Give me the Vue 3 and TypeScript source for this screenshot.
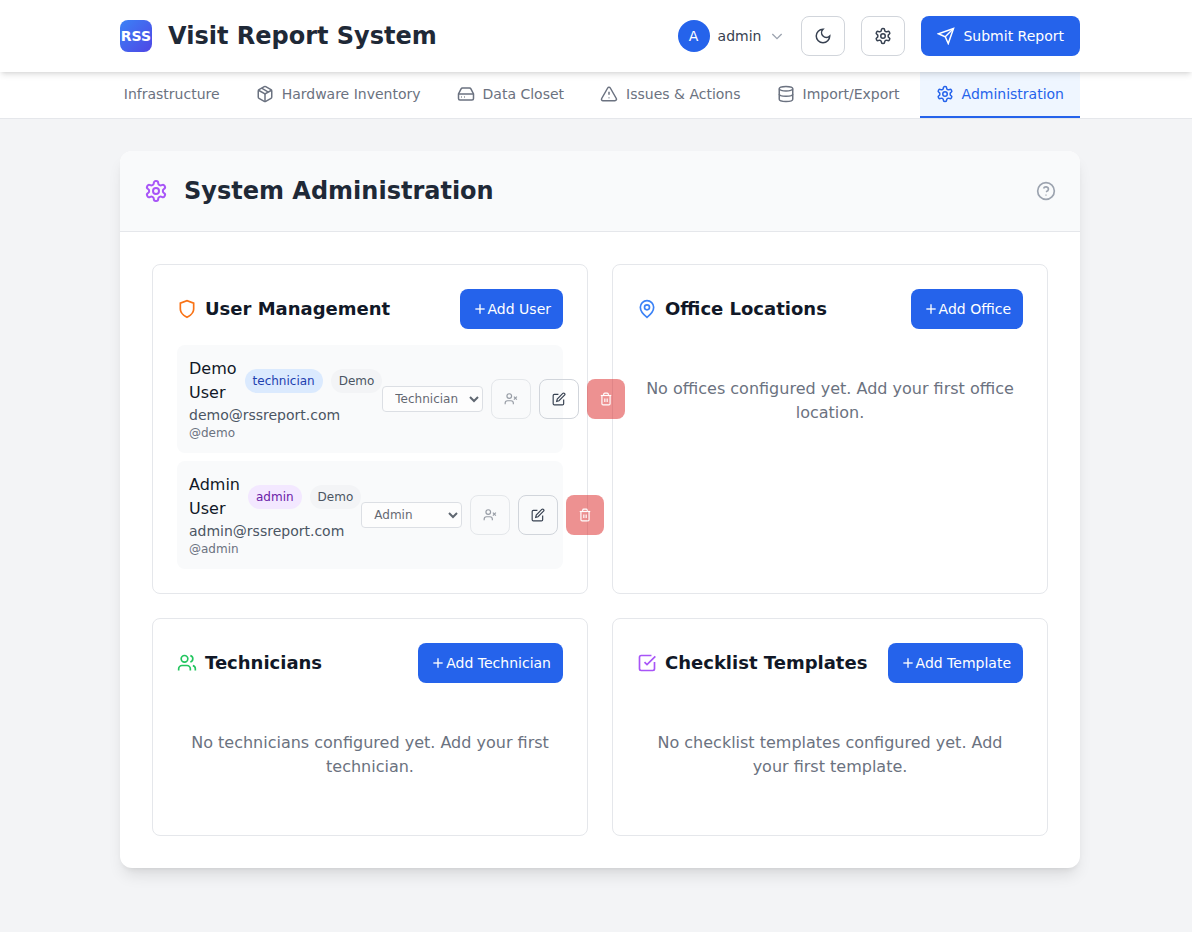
<script setup lang="ts">
import { h, ref } from 'vue'
import type { FunctionalComponent } from 'vue'

const glyphs = {
  settings: [
    'M12.22 2h-.44a2 2 0 0 0-2 2v.18a2 2 0 0 1-1 1.73l-.43.25a2 2 0 0 1-2 0l-.15-.08a2 2 0 0 0-2.73.73l-.22.38a2 2 0 0 0 .73 2.73l.15.1a2 2 0 0 1 1 1.72v.51a2 2 0 0 1-1 1.74l-.15.09a2 2 0 0 0-.73 2.73l.22.38a2 2 0 0 0 2.73.73l.15-.08a2 2 0 0 1 2 0l.43.25a2 2 0 0 1 1 1.73V20a2 2 0 0 0 2 2h.44a2 2 0 0 0 2-2v-.18a2 2 0 0 1 1-1.73l.43-.25a2 2 0 0 1 2 0l.15.08a2 2 0 0 0 2.73-.73l.22-.39a2 2 0 0 0-.73-2.73l-.15-.08a2 2 0 0 1-1-1.74v-.5a2 2 0 0 1 1-1.74l.15-.09a2 2 0 0 0 .73-2.73l-.22-.38a2 2 0 0 0-2.73-.73l-.15.08a2 2 0 0 1-2 0l-.43-.25a2 2 0 0 1-1-1.73V4a2 2 0 0 0-2-2z',
    'M15 12a3 3 0 1 1-6 0a3 3 0 0 1 6 0z',
  ],
  package: [
    'M11 21.73a2 2 0 0 0 2 0l7-4A2 2 0 0 0 21 16V8a2 2 0 0 0-1-1.73l-7-4a2 2 0 0 0-2 0l-7 4A2 2 0 0 0 3 8v8a2 2 0 0 0 1 1.73z',
    'M12 22V12',
    'M3.29 7 12 12l8.71-5',
    'm7.5 4.27 9 5.15',
  ],
  drive: [
    'M22 12H2',
    'M5.45 5.11 2 12v6a2 2 0 0 0 2 2h16a2 2 0 0 0 2-2v-6l-3.45-6.89A2 2 0 0 0 16.76 4H7.24a2 2 0 0 0-1.79 1.11z',
    'M5.5 16h1',
    'M9.5 16h1',
  ],
  alert: [
    'm21.73 18-8-14a2 2 0 0 0-3.48 0l-8 14A2 2 0 0 0 4 21h16a2 2 0 0 0 1.73-3z',
    'M12 9v4',
    'M11.5 17h1',
  ],
  database: [
    'M21 5a9 3 0 1 1-18 0a9 3 0 0 1 18 0z',
    'M3 5v14a9 3 0 0 0 18 0V5',
    'M3 12a9 3 0 0 0 18 0',
  ],
  moon: ['M12 3a6 6 0 0 0 9 9 9 9 0 1 1-9-9z'],
  send: ['M22 2 15 22l-4-9-9-4z', 'M22 2 11 13'],
  chevron: ['m5 9 7 7 7-7'],
  help: [
    'M22 12a10 10 0 1 1-20 0a10 10 0 0 1 20 0z',
    'M9.09 9a3 3 0 0 1 5.83 1c0 2-3 3-3 3',
    'M11.5 17h1',
  ],
  shield: ['M12 22s8-4 8-10V5l-8-3-8 3v7c0 6 8 10 8 10z'],
  pin: [
    'M20 10c0 6-8 12-8 12s-8-6-8-12a8 8 0 0 1 16 0z',
    'M15 10a3 3 0 1 1-6 0a3 3 0 0 1 6 0z',
  ],
  users: [
    'M16 21v-2a4 4 0 0 0-4-4H6a4 4 0 0 0-4 4v2',
    'M13 7a4 4 0 1 1-8 0a4 4 0 0 1 8 0z',
    'M16 3.128a4 4 0 0 1 0 7.744',
    'M22 21v-2a4 4 0 0 0-3-3.87',
  ],
  check: [
    'M21 10.656V19a2 2 0 0 1-2 2H5a2 2 0 0 1-2-2V5a2 2 0 0 1 2-2h12.344',
    'm9 11 3 3L22 4',
  ],
  plus: ['M5 12h14', 'M12 5v14'],
  userX: [
    'M16 21v-2a4 4 0 0 0-4-4H6a4 4 0 0 0-4 4v2',
    'M13 7a4 4 0 1 1-8 0a4 4 0 0 1 8 0z',
    'm17 8 5 5',
    'm22 8-5 5',
  ],
  edit: [
    'M11 4H4a2 2 0 0 0-2 2v14a2 2 0 0 0 2 2h14a2 2 0 0 0 2-2v-7',
    'M18.5 2.5a2.121 2.121 0 0 1 3 3L12 15l-4 1 1-4z',
  ],
  trash: [
    'M3 6h18',
    'M19 6v14a2 2 0 0 1-2 2H7a2 2 0 0 1-2-2V6',
    'M8 6V4a2 2 0 0 1 2-2h4a2 2 0 0 1 2 2v2',
    'M10 11v6',
    'M14 11v6',
  ],
} satisfies Record<string, string[]>

type IconName = keyof typeof glyphs

const Icon: FunctionalComponent<{ name: IconName; size?: number }> = (props) =>
  h(
    'svg',
    {
      width: props.size ?? 18,
      height: props.size ?? 18,
      viewBox: '0 0 24 24',
      fill: 'none',
      stroke: 'currentColor',
      'stroke-width': 2,
      'aria-hidden': 'true',
    },
    glyphs[props.name].map((d) => h('path', { d })),
  )
Icon.props = ['name', 'size']

interface Tab { label: string; icon?: IconName }
const tabs: Tab[] = [
  { label: 'Infrastructure' },
  { label: 'Hardware Inventory', icon: 'package' },
  { label: 'Data Closet', icon: 'drive' },
  { label: 'Issues & Actions', icon: 'alert' },
  { label: 'Import/Export', icon: 'database' },
  { label: 'Administration', icon: 'settings' },
]
const activeTab = ref('Administration')

type Role = 'technician' | 'admin'
interface User { id: string; name: string; email: string; role: Role }
const users = ref<User[]>([
  { id: 'demo', name: 'Demo User', email: 'demo@rssreport.com', role: 'technician' },
  { id: 'admin', name: 'Admin User', email: 'admin@rssreport.com', role: 'admin' },
])

interface Panel { key: string; title: string; icon: IconName; action: string; empty?: string }
const panels: Panel[] = [
  { key: 'users', title: 'User Management', icon: 'shield', action: 'Add User' },
  { key: 'offices', title: 'Office Locations', icon: 'pin', action: 'Add Office', empty: 'No offices configured yet. Add your first office location.' },
  { key: 'technicians', title: 'Technicians', icon: 'users', action: 'Add Technician', empty: 'No technicians configured yet. Add your first technician.' },
  { key: 'templates', title: 'Checklist Templates', icon: 'check', action: 'Add Template', empty: 'No checklist templates configured yet. Add your first template.' },
]
</script>

<template>
  <div class="page">
    <header class="topbar gutter">
      <div class="brand">
        <span class="logo">RSS</span>
        <h1>Visit Report System</h1>
      </div>
      <div class="actions">
        <button type="button" class="account">
          <span class="avatar">A</span>
          <span>admin</span>
          <Icon name="chevron" :size="16" class="caret" />
        </button>
        <button type="button" class="btn outline" aria-label="Toggle dark mode"><Icon name="moon" /></button>
        <button type="button" class="btn outline" aria-label="Settings"><Icon name="settings" /></button>
        <button type="button" class="btn primary submit"><Icon name="send" />Submit Report</button>
      </div>
    </header>

    <nav class="tabbar gutter" aria-label="Sections">
      <div class="tabs">
        <button
          v-for="tab in tabs"
          :key="tab.label"
          type="button"
          class="tab"
          :class="{ active: tab.label === activeTab }"
          @click="activeTab = tab.label"
        >
          <Icon v-if="tab.icon" :name="tab.icon" />
          {{ tab.label }}
        </button>
      </div>
    </nav>

    <main class="content gutter">
      <section class="admin-card">
        <div class="admin-head">
          <Icon name="settings" :size="24" class="admin-icon" />
          <h2>System Administration</h2>
          <button type="button" class="help" aria-label="Help"><Icon name="help" :size="20" /></button>
        </div>

        <div class="grid">
          <section v-for="panel in panels" :key="panel.key" class="panel">
            <div class="panel-head">
              <h3><Icon :name="panel.icon" :size="20" :class="panel.key" />{{ panel.title }}</h3>
              <button type="button" class="btn primary"><Icon name="plus" :size="16" />{{ panel.action }}</button>
            </div>
            <p v-if="panel.empty" class="empty">{{ panel.empty }}</p>
            <ul v-else class="users-list">
              <li v-for="user in users" :key="user.id" class="user">
                <div>
                  <div class="identity">
                    <span class="name">{{ user.name }}</span>
                    <span class="badge" :class="`role-${user.role}`">{{ user.role }}</span>
                    <span class="badge">Demo</span>
                  </div>
                  <div class="email">{{ user.email }}</div>
                  <div class="handle">@{{ user.id }}</div>
                </div>
                <div class="controls">
                  <select v-model="user.role" disabled :aria-label="`Role of ${user.name}`">
                    <option value="technician">Technician</option>
                    <option value="admin">Admin</option>
                  </select>
                  <button type="button" class="btn outline" disabled :aria-label="`Deactivate ${user.name}`"><Icon name="userX" :size="14" /></button>
                  <button type="button" class="btn outline" :aria-label="`Edit ${user.name}`"><Icon name="edit" :size="14" /></button>
                  <button type="button" class="btn danger" disabled :aria-label="`Delete ${user.name}`"><Icon name="trash" :size="14" /></button>
                </div>
              </li>
            </ul>
          </section>
        </div>
      </section>
    </main>
  </div>
</template>

<style>
body {
  margin: 0;
  background: #fff;
}
</style>

<style scoped>
.page {
  background: #f3f4f6;
  color: #111827;
  font-family: "DejaVu Sans", sans-serif;
  font-size: 16px;
  line-height: 24px;
}
.page *, .page { box-sizing: border-box; }
h1, h2, h3, p, ul { margin: 0; padding: 0; }
svg { display: block; flex: none; }
button { margin: 0; font: inherit; cursor: pointer; }
button:disabled { opacity: 0.5; cursor: not-allowed; }

.gutter { padding-left: 120px; padding-right: 112px; }

.topbar {
  position: sticky;
  top: 0;
  z-index: 10;
  display: flex;
  align-items: center;
  justify-content: space-between;
  padding-top: 16px;
  padding-bottom: 16px;
  background: #fff;
  box-shadow: 0 4px 6px -1px rgba(0, 0, 0, 0.1), 0 2px 4px -2px rgba(0, 0, 0, 0.1);
}
.brand, .actions { display: flex; align-items: center; gap: 16px; }
.logo {
  display: flex;
  align-items: center;
  justify-content: center;
  width: 32px;
  height: 32px;
  border-radius: 8px;
  background: linear-gradient(to bottom right, #3b82f6, #4f46e5);
  color: #fff;
  font-size: 14px;
  font-weight: 700;
}
h1, h2 { font-size: 24px; line-height: 32px; font-weight: 700; color: #1f2937; }

.account {
  display: flex;
  align-items: center;
  gap: 8px;
  padding: 0;
  border: 0;
  background: none;
  color: #374151;
  font-size: 14px;
  line-height: 20px;
}
.avatar {
  display: flex;
  align-items: center;
  justify-content: center;
  width: 32px;
  height: 32px;
  border-radius: 50%;
  background: #2563eb;
  color: #fff;
}
.caret { color: #9ca3af; }

.btn {
  display: inline-flex;
  align-items: center;
  justify-content: center;
  flex: none;
  height: 40px;
  padding: 0 12px;
  border: 0;
  border-radius: 8px;
  font-size: 14px;
  line-height: 20px;
  white-space: nowrap;
}
.outline { border: 1px solid #d1d5db; background: transparent; color: #374151; }
.primary { background: #2563eb; color: #fff; }
.danger { background: #dc2626; color: #fff; }
.submit { gap: 8px; padding: 0 16px; }

.tabbar { background: #fff; border-bottom: 1px solid #e5e7eb; }
.tabs { display: flex; justify-content: flex-end; gap: 4px; overflow: hidden; }
.tab {
  display: flex;
  align-items: center;
  flex: none;
  gap: 8px;
  padding: 12px 16px;
  border: 0;
  border-bottom: 2px solid transparent;
  background: none;
  color: #6b7280;
  font-size: 14px;
  line-height: 20px;
  white-space: nowrap;
}
.tab.active { border-color: #2563eb; background: #eff6ff; color: #2563eb; }

.content { padding-top: 32px; padding-bottom: 64px; }
.admin-card {
  border-radius: 12px;
  background: #fff;
  box-shadow: 0 10px 15px -3px rgba(0, 0, 0, 0.1), 0 4px 6px -4px rgba(0, 0, 0, 0.1);
}
.admin-head {
  display: flex;
  align-items: center;
  gap: 16px;
  padding: 24px;
  border-bottom: 1px solid #e5e7eb;
  border-radius: 12px 12px 0 0;
  background: #f9fafb;
}
.admin-icon { color: #a855f7; }
.help { margin-left: auto; padding: 0; border: 0; background: none; color: #9ca3af; }

.grid {
  display: grid;
  grid-template-columns: repeat(2, minmax(0, 1fr));
  gap: 24px;
  padding: 32px;
}
.panel { padding: 24px; border: 1px solid #e5e7eb; border-radius: 8px; }
.panel-head {
  display: flex;
  align-items: center;
  justify-content: space-between;
  margin-bottom: 16px;
}
h3 { display: flex; align-items: center; gap: 8px; font-size: 18px; line-height: 28px; font-weight: 700; }
.users { color: #f97316; }
.offices { color: #3b82f6; }
.technicians { color: #22c55e; }
.templates { color: #a855f7; }
.empty { padding: 32px 0; color: #6b7280; text-align: center; }

.users-list { display: flex; flex-direction: column; gap: 8px; list-style: none; }
.user {
  display: flex;
  align-items: center;
  justify-content: space-between;
  padding: 12px;
  border-radius: 8px;
  background: #f9fafb;
}
.identity { display: flex; align-items: center; gap: 8px; }
.badge {
  padding: 4px 8px;
  border-radius: 12px;
  background: #f3f4f6;
  color: #4b5563;
  font-size: 12px;
  line-height: 16px;
}
.role-technician { background: #dbeafe; color: #1e40af; }
.role-admin { background: #f3e8ff; color: #6b21a8; }
.email { color: #4b5563; font-size: 14px; line-height: 20px; }
.handle { color: #6b7280; font-size: 12px; line-height: 16px; }

.controls { display: flex; align-items: center; gap: 8px; }
select {
  margin: 0;
  padding: 4px 8px;
  border: 1px solid #d1d5db;
  border-radius: 4px;
  background-color: #fff;
  color: #1f2937;
  font-family: inherit;
  font-size: 12px;
  line-height: 16px;
}
</style>
